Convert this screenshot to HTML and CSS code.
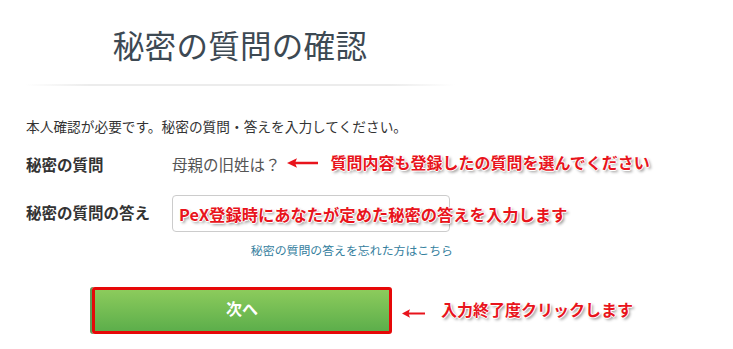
FILE: index.html
```html
<!DOCTYPE html>
<html lang="ja">
<head>
<meta charset="utf-8">
<title>秘密の質問の確認</title>
<link rel="stylesheet" href="styles.css">
</head>
<body>
<div class="page">
  <header class="head">
    <h1 class="title">秘密の質問の確認</h1>
  </header>
  <section class="form">
    <p class="intro">本人確認が必要です。秘密の質問・答えを入力してください。</p>
    <div class="row row-q">
      <div class="label">秘密の質問</div>
      <div class="value">
        <span class="question">母親の旧姓は？</span>
        <svg class="arrow arrow-q" width="32" height="10" viewBox="0 0 32 10"><path d="M0 5 L10 0.3 L8.5 3.7 L31 3.7 L31 6.3 L8.5 6.3 L10 9.7 Z" fill="#e8141c"/></svg>
        <span class="note note-q">質問内容も登録したの質問を選んでください</span>
      </div>
    </div>
    <div class="row row-a">
      <div class="label">秘密の質問の答え</div>
      <div class="field">
        <div class="input"></div>
        <span class="note note-a">PeX登録時にあなたが定めた秘密の答えを入力します</span>
      </div>
    </div>
    <div class="forgot"><a class="link" href="#">秘密の質問の答えを忘れた方はこちら</a></div>
    <div class="actions">
      <button class="next" type="button">次へ</button>
      <svg class="arrow arrow-b" width="24" height="9" viewBox="0 0 24 9"><path d="M0 4.5 L8 0.3 L6.8 3.4 L23 3.4 L23 5.6 L6.8 5.6 L8 8.7 Z" fill="#e8141c"/></svg>
      <span class="note note-b">入力終了度クリックします</span>
    </div>
  </section>
</div>
</body>
</html>
```
FILE: styles.css
```css
html, body {
  margin: 0;
  padding: 0;
  background: #ffffff;
}
body {
  font-family: "Noto Sans CJK JP", "Noto Sans", sans-serif;
  color: #333333;
}
.page {
  width: 733px;
}
.head {
  margin-left: 25px;
  width: 430px;
  padding-top: 24px;
  height: 60px;
  position: relative;
}
.head::after {
  content: "";
  position: absolute;
  left: 0;
  right: 0;
  bottom: -2px;
  height: 2px;
  background: linear-gradient(to right, rgba(230,230,230,0), #ececec 15%, #ececec 85%, rgba(230,230,230,0));
}
.title {
  margin: 0;
  font-size: 31.5px;
  line-height: 40px;
  font-weight: 400;
  color: #3d4953;
  text-align: center;
  letter-spacing: 0.3px;
}
.form {
  padding-left: 26px;
}
.intro {
  margin: 32px 0 0;
  font-size: 13.7px;
  line-height: 20px;
  color: #333;
}
.row {
  display: grid;
  grid-template-columns: 146px auto;
  align-items: center;
}
.row-q {
  margin-top: 16px;
  height: 24px;
}
.row-a {
  margin-top: 19px;
}
.label {
  font-size: 15.5px;
  font-weight: 700;
  color: #333;
  line-height: 24px;
}
.row-a .label {
  margin-top: -3px;
}
.value {
  display: flex;
  align-items: center;
}
.question {
  font-size: 15.5px;
  color: #555;
  line-height: 24px;
}
.arrow-q {
  margin-left: 6px;
  margin-top: -2px;
}
.note {
  color: #e8141c;
  font-weight: 700;
  font-size: 16px;
  white-space: nowrap;
  text-shadow: 0 0 1px #fff, 1px 0 0 #fff, -1px 0 0 #fff, 0 1px 0 #fff, 0 -1px 0 #fff, 2px 2px 3px rgba(0,0,0,0.45);
}
.note-q {
  margin-left: 12px;
  margin-top: -4px;
}
.field {
  position: relative;
  height: 37px;
}
.input {
  width: 276px;
  height: 35px;
  border: 1px solid #cccccc;
  border-radius: 4px;
  background: #fff;
}
.note-a {
  position: absolute;
  left: 7px;
  top: 7px;
  font-size: 16.3px;
  letter-spacing: 0;
}
.forgot {
  margin-top: 7px;
  width: 427px;
  text-align: right;
  line-height: 18px;
}
.link {
  font-size: 11.9px;
  color: #35809e;
  text-decoration: none;
}
.actions {
  margin-top: 28px;
  display: flex;
  align-items: center;
}
.next {
  margin-left: 66px;
  width: 300px;
  height: 47px;
  border: 3px solid #e60808;
  border-radius: 3px;
  background: linear-gradient(to bottom, #8ccb5c, #5cae4b);
  box-shadow: -2px 0 0 #5f9c58;
  color: #ffffff;
  font-family: "Noto Sans CJK JP", sans-serif;
  font-size: 16px;
  font-weight: 700;
  padding: 0;
  padding-bottom: 6px;
}
.arrow-b {
  margin-left: 10px;
  margin-top: 6px;
}
.note-b {
  margin-left: 15px;
  margin-top: -3px;
}
```
